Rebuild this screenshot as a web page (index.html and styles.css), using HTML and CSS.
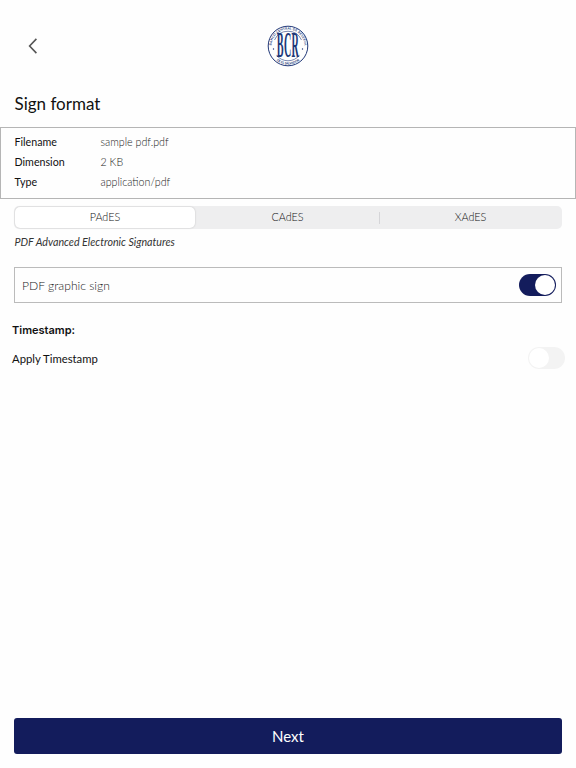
FILE: index.html
```
<!DOCTYPE html>
<html lang="en">
<head>
	<meta charset="UTF-8">
	<title>Sign format</title>
	<link rel="stylesheet" href="styles.css">
</head>
<body>
	<div class="page">
		<header class="header">
			<a class="back" href="#" aria-label="Back">
				<svg width="10" height="16" viewBox="0 0 10 16"><path d="M8.4 .9L1.6 8l6.8 7.1"/></svg>
			</a>
			<svg class="logo" width="42" height="42" viewBox="0 0 42 42">
				<defs>
					<path id="arc-top" d="M5 24.5A16.4 16.4 0 1 1 37 24.5"/>
					<path id="arc-bottom" d="M5 30.2A18.4 18.4 0 0 0 37 30.2"/>
				</defs>
				<circle class="ring" cx="21" cy="21" r="19.8"/>
				<path class="ring-inner" d="M7.5 15A14.8 14.8 0 0 1 34.5 15M9.5 30.3A14.8 14.8 0 0 0 32.5 30.3"/>
				<circle class="dot" cx="6.5" cy="24" r=".7"/>
				<circle class="dot" cx="35.5" cy="24" r=".7"/>
				<text class="ring-text"><textPath href="#arc-top" startOffset="50%" text-anchor="middle" textLength="50">BANCO CENTRAL DE RESERVA</textPath></text>
				<text class="ring-text"><textPath href="#arc-bottom" startOffset="50%" text-anchor="middle" textLength="25">DE EL SALVADOR</textPath></text>
				<text class="logo-text" transform="translate(21 32.3) scale(.29 1)" text-anchor="middle">BCR</text>
			</svg>
		</header>

		<h1 class="title">Sign format</h1>

		<dl class="file-info">
			<dt>Filename</dt><dd>sample pdf.pdf</dd>
			<dt>Dimension</dt><dd>2 KB</dd>
			<dt>Type</dt><dd>application/pdf</dd>
		</dl>

		<div class="tabs">
			<div class="tab active">PAdES</div>
			<div class="tab">CAdES</div>
			<div class="tab last">XAdES</div>
		</div>
		<p class="tab-desc">PDF Advanced Electronic Signatures</p>

		<div class="option">
			<span>PDF graphic sign</span>
			<div class="switch on"></div>
		</div>

		<h2 class="subtitle">Timestamp:</h2>
		<div class="timestamp">
			<span>Apply Timestamp</span>
			<div class="switch"></div>
		</div>

		<button class="next">Next</button>
	</div>
</body>
</html>
```
FILE: styles.css
```
* {
	margin: 0;
	padding: 0;
	box-sizing: border-box;
}
body {
	background: #fefefe;
	color: #111;
	font-family: Lato, "Liberation Sans", sans-serif;
}
.page {
	height: 768px;
	display: flex;
	flex-direction: column;
}

/* header */
.header {
	height: 92px;
	padding: 0 28px;
	display: grid;
	grid-template-columns: 1fr auto 1fr;
	align-items: center;
}
.back svg {
	display: block;
	fill: none;
	stroke: #555;
	stroke-width: 1.6;
}
.logo {
	display: block;
}
.ring, .ring-inner {
	fill: none;
	stroke: #213878;
	stroke-width: 1;
}
.ring-inner {
	stroke-width: .6;
}
.dot {
	fill: #213878;
}
.ring-text {
	font-size: 3.2px;
	font-weight: bold;
	fill: #213878;
}
.logo-text {
	font-family: "Liberation Serif", serif;
	font-size: 35px;
	font-weight: bold;
	fill: #213878;
	letter-spacing: 1px;
}

.title {
	height: 35px;
	padding-left: 14.5px;
	font-size: 17px;
	font-weight: 400;
	line-height: 23px;
}

/* file details */
.file-info {
	height: 72px;
	padding: 4px 14px 4px 13.5px;
	border: 1px solid #b5b5b5;
	display: grid;
	grid-template-columns: 86px 1fr;
	grid-auto-rows: 20px;
	font-size: 10.7px;
	line-height: 19px;
}
.file-info dd {
	color: #222;
	font-weight: 300;
}

/* signature formats */
.tabs {
	height: 23px;
	margin: 7px 14px 0;
	border-radius: 5px;
	background: #eeeeef;
	display: grid;
	grid-template-columns: 182px 183px 1fr;
}
.tab {
	font-size: 10.8px;
	line-height: 22px;
	text-align: center;
	font-weight: 300;
	color: #111;
}
.tab.active {
	margin: 1px;
	line-height: 20px;
	border-radius: 5px;
	background: #fff;
	box-shadow: 0 0 2px rgba(0, 0, 0, .2);
}
.tab.last {
	background: linear-gradient(#d5d5d8, #d5d5d8) 0 50% / 1px 12px no-repeat;
}
.tab-desc {
	height: 38px;
	padding: 3px 14.5px 0;
	font-size: 10.7px;
	font-style: italic;
	line-height: 20px;
	color: #333;
}

.option {
	height: 36px;
	margin: 0 14px;
	padding: 0 5px 0 7px;
	border: 1px solid #bbb;
	display: flex;
	align-items: center;
	justify-content: space-between;
	font-size: 12.1px;
	font-weight: 300;
	color: #222;
}

/* switch */
.switch {
	width: 37px;
	height: 22px;
	padding: 1px;
	border-radius: 11px;
	background: #f3f3f3;
	display: flex;
}
.switch::before {
	content: '';
	width: 20px;
	height: 20px;
	border-radius: 50%;
	background: #fff;
}
.switch.on {
	background: #131c5c;
	justify-content: flex-end;
}

.subtitle {
	margin-top: 17px;
	padding-left: 12px;
	font-family: Inter, sans-serif;
	font-size: 11px;
	font-weight: 600;
	line-height: 20px;
}
.timestamp {
	margin-top: 7px;
	padding: 0 11px 0 12px;
	display: flex;
	align-items: center;
	justify-content: space-between;
	font-size: 11.3px;
}

.next {
	height: 36px;
	margin: auto 14px 14px;
	border: 0;
	border-radius: 3px;
	background: #131c5c;
	color: #fff;
	font-family: inherit;
	font-size: 15px;
}
```
